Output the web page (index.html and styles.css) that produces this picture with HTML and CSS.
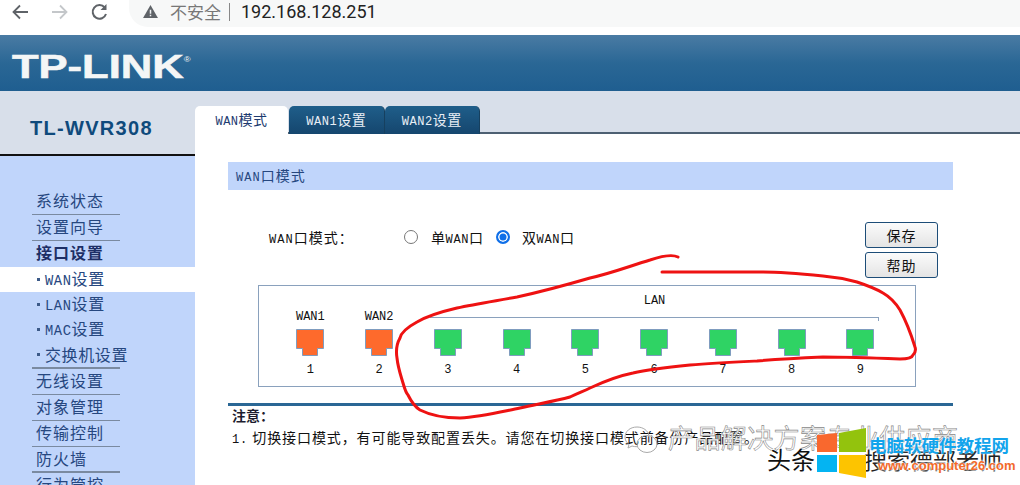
FILE: index.html
```html
<!DOCTYPE html>
<html>
<head>
  <title>TL-WVR308</title>
  <link rel="stylesheet" href="styles.css">
</head>
<body>
  <div class="browser-bar">
    <svg class="nav-icon" width="20" height="20" viewBox="0 0 20 20"><path d="M18 10H4M10 3.500L3.500 10l6.500 6.500" fill="none" stroke="#5f6368" stroke-width="1.800"/></svg>
    <svg class="nav-icon forward" width="20" height="20" viewBox="0 0 20 20"><path d="M2 10h14M10 3.500l6.500 6.500-6.500 6.500" fill="none" stroke="#c4c7ca" stroke-width="1.800"/></svg>
    <svg class="nav-icon reload" width="20" height="20" viewBox="0 0 20 20"><path d="M16 12a6.800 6.800 0 1 1-1.300-6.500" fill="none" stroke="#5f6368" stroke-width="2"/><path d="M16.500 2v6h-6z" fill="#5f6368"/></svg>
    <div class="url-pill">
      <svg width="15" height="13" viewBox="0 0 16 14"><path d="M8 0l8 14H0z" fill="#5f6368"/><path d="M7.200 5h1.600v4.500H7.200zM7.200 10.500h1.600V12H7.200z" fill="#f1f3f4"/></svg>
      <span class="not-safe">不安全</span>
      <span class="url-sep"></span>
      <span class="url-text">192.168.128.251</span>
    </div>
  </div>

  <header class="logo-bar">
    <div class="logo">TP-LINK<sup>®</sup></div>
  </header>

  <div class="page">
    <aside class="side">
      <div class="model">TL-WVR308</div>
      <nav class="menu">
        <div class="item">系统状态</div>
        <div class="item">设置向导</div>
        <div class="item open">接口设置</div>
        <div class="sub active"><i></i><span><span class="lt">WAN</span>设置</span></div>
        <div class="sub"><i></i><span><span class="lt">LAN</span>设置</span></div>
        <div class="sub"><i></i><span><span class="lt">MAC</span>设置</span></div>
        <div class="sub"><i></i><span>交换机设置</span></div>
        <div class="item after-sub">无线设置</div>
        <div class="item">对象管理</div>
        <div class="item">传输控制</div>
        <div class="item thick">防火墙</div>
        <div class="item">行为管控</div>
      </nav>
    </aside>

    <main class="main">
      <div class="tabs">
        <div class="tab current"><span class="lt">WAN</span>模式</div>
        <div class="tab"><span class="lt">WAN1</span>设置</div>
        <div class="tab"><span class="lt">WAN2</span>设置</div>
      </div>
      <div class="content">
        <h2 class="title"><span class="lt">WAN</span>口模式</h2>
        <div class="form-row">
          <span class="form-label"><span class="lt">WAN</span>口模式：</span>
          <span class="radio"></span>
          <span class="radio-text">单<span class="lt">WAN</span>口</span>
          <span class="radio on"></span>
          <span class="radio-text">双<span class="lt">WAN</span>口</span>
          <div class="buttons">
            <button class="btn">保存</button>
            <button class="btn">帮助</button>
          </div>
        </div>
        <div class="port-box">
          <div class="lan-head">
            <div class="lan-name">LAN</div>
            <div class="lan-line"></div>
          </div>
          <div class="ports">
            <div class="port wan"><span class="port-name">WAN1</span><svg width="28" height="27" viewBox="0 0 28 27"><path d="M.5.5h27v19h-6v7h-15v-7h-6z"/></svg><span class="port-num">1</span></div>
            <div class="port wan"><span class="port-name">WAN2</span><svg width="28" height="27" viewBox="0 0 28 27"><path d="M.5.5h27v19h-6v7h-15v-7h-6z"/></svg><span class="port-num">2</span></div>
            <div class="port"><span class="port-name"></span><svg width="28" height="27" viewBox="0 0 28 27"><path d="M.5.5h27v19h-6v7h-15v-7h-6z"/></svg><span class="port-num">3</span></div>
            <div class="port"><span class="port-name"></span><svg width="28" height="27" viewBox="0 0 28 27"><path d="M.5.5h27v19h-6v7h-15v-7h-6z"/></svg><span class="port-num">4</span></div>
            <div class="port"><span class="port-name"></span><svg width="28" height="27" viewBox="0 0 28 27"><path d="M.5.5h27v19h-6v7h-15v-7h-6z"/></svg><span class="port-num">5</span></div>
            <div class="port"><span class="port-name"></span><svg width="28" height="27" viewBox="0 0 28 27"><path d="M.5.5h27v19h-6v7h-15v-7h-6z"/></svg><span class="port-num">6</span></div>
            <div class="port"><span class="port-name"></span><svg width="28" height="27" viewBox="0 0 28 27"><path d="M.5.5h27v19h-6v7h-15v-7h-6z"/></svg><span class="port-num">7</span></div>
            <div class="port"><span class="port-name"></span><svg width="28" height="27" viewBox="0 0 28 27"><path d="M.5.5h27v19h-6v7h-15v-7h-6z"/></svg><span class="port-num">8</span></div>
            <div class="port"><span class="port-name"></span><svg width="28" height="27" viewBox="0 0 28 27"><path d="M.5.5h27v19h-6v7h-15v-7h-6z"/></svg><span class="port-num">9</span></div>
          </div>
        </div>
        <div class="note">
          <div class="note-head">注意：</div>
          <div class="note-text"><span class="lt">1.</span> 切换接口模式，有可能导致配置丢失。请您在切换接口模式前备份产品配置。</div>
        </div>
      </div>
    </main>
  </div>

  <!-- hand drawn mark and watermark lie over the page -->
  <svg class="scribble" width="1020" height="485" viewBox="0 0 1020 485">
    <path d="M678 257C672 254 662 256 650 260C630 266 612 273 590 278C566 285 540 292 517 297C495 301 475 304 457 308C440 312 427 316 417 322C406 328 401 333 400 338C396 345 396 352 397 358C398 368 401 376 403 383C405 390 406 393 408 395C412 403 415 407 420 410C432 416 446 418 460 418C480 417 500 412 520 408C538 404 555 401 570 397C578 393 584 391 590 388C605 381 618 376 633 373C650 369 670 367 690 365C712 363 735 362 757 361C780 359 800 358 823 357C850 357 875 358 900 359C908 359 912 358 913 355C916 352 916 350 915 347C911 334 906 321 900 310C895 302 890 297 883 293C875 288 866 285 857 282C846 279 835 277 823 276C803 274 783 272 763 272C730 272 695 272 662 272" fill="none" stroke="#ee1212" stroke-width="3" stroke-linecap="round"/>
  </svg>
  <div class="watermark">
    <svg class="wx" width="34" height="30" viewBox="0 0 34 30"><path d="M13 1C6 1 1 5.500 1 11c0 3 1.500 5.500 4 7.500L4 22l4-2c1.500.5 3 .7 5 .7" fill="none" stroke="#aaa"/><path d="M13 1c6 0 11 3.500 12 8.500" fill="none" stroke="#aaa"/><ellipse cx="23" cy="18" rx="10" ry="8.500" fill="none" stroke="#aaa"/></svg>
    <div class="wm-line">产品解决方案专业供应商</div>
    <div class="wm-toutiao">头条</div>
    <div class="wm-account">搜索德部老师</div>
    <svg class="win" width="52" height="52" viewBox="0 0 52 52"><path d="M1 7l20-2v19H1z" fill="#f9682e"/><path d="M23 5l27-5v24H23z" fill="#93c30d"/><path d="M1 27h20v17H1z" fill="#04b4f2"/><path d="M23 27h27v23l-27-5z" fill="#fdc400"/></svg>
    <div class="wm-site">电脑软硬件教程网</div>
    <div class="wm-url">www.computer26.com</div>
  </div>
</body>
</html>
```

FILE: styles.css
```css
html, body {
  margin: 0;
  padding: 0;
}
body {
  position: relative;
  width: 1020px;
  height: 485px;
  overflow: hidden;
  background-color: #fff;
  font-family: "Noto Sans CJK SC", sans-serif;
  color: #111;
}
.lt {
  font-family: "Liberation Mono", monospace;
  font-size: 0.86em;
}

/* browser bar */
.browser-bar {
  display: flex;
  align-items: center;
  height: 33px;
  padding-bottom: 2px;
  padding-left: 10px;
  border-bottom: 2px solid #d5d8dc;
  background-color: #fff;
}
.nav-icon {
  margin-right: 20px;
  margin-top: -10px;
}
.nav-icon.reload {
  margin-right: 19px;
}
.url-pill {
  display: flex;
  flex: 1;
  align-items: center;
  height: 38px;
  margin-top: -18px;
  padding-left: 14px;
  padding-top: 8px;
  box-sizing: border-box;
  border-radius: 0 0 0 19px;
  background-color: #f7f8f8;
}
.not-safe {
  margin-left: 12px;
  font-size: 17px;
  color: #777;
}
.url-sep {
  width: 1px;
  height: 18px;
  margin: 0 11px 0 8px;
  background-color: #888;
}
.url-text {
  font-family: Roboto, sans-serif;
  font-size: 18px;
  color: #222;
}

/* logo */
.logo-bar {
  height: 56px;
  margin-top: -2px;
  background: linear-gradient(#4a7ba3, #2a6795 50%, #1f5e90);
}
.logo {
  width: fit-content;
  padding: 6px 0 0 9px;
  font-family: "Liberation Sans", sans-serif;
  font-weight: bold;
  font-size: 33px;
  line-height: 38px;
  color: #f4f6f6;
  transform: scaleX(1.32);
  transform-origin: left;
  -webkit-text-stroke: 0.6px #f4f6f6;
}
.logo sup {
  font-size: 7px;
  font-weight: normal;
  vertical-align: 16px;
  -webkit-text-stroke: 0;
}

/* layout */
.page {
  display: flex;
  height: 394px;
}
.side {
  width: 195px;
  flex: none;
  background-color: #c0d5fb;
}
.model {
  height: 65px;
  padding: 24px 0 0 30px;
  box-sizing: border-box;
  border-bottom: 2px solid #111;
  background-color: #d8dfea;
  font-family: "Liberation Sans", sans-serif;
  font-weight: bold;
  font-size: 20px;
  line-height: 26px;
  letter-spacing: 1.3px;
  color: #0f4a7c;
}

/* left menu */
.menu {
  padding-top: 33px;
}
.item {
  width: 88px;
  height: 26px;
  margin-left: 32px;
  padding-left: 4px;
  box-sizing: border-box;
  border-bottom: 1px solid #7a8aa0;
  font-size: 16px;
  line-height: 23px;
  letter-spacing: 1px;
  color: #26477f;
  white-space: nowrap;
}
.item.open {
  border-bottom: none;
  font-weight: bold;
  color: #1d2f66;
}
.item.thick {
  border-bottom: 2px solid #7a8aa0;
}
.item.after-sub {
  height: 28px;
  border-top: 2px solid #7a8aa0;
}
.sub {
  display: flex;
  align-items: center;
  height: 25px;
  padding-left: 37px;
  font-size: 16px;
  line-height: 25px;
  letter-spacing: 0.6px;
  color: #26477f;
}
.sub i {
  width: 3px;
  height: 3px;
  margin-right: 5px;
  background-color: #3c5a88;
}
.sub.active {
  background-color: #fff;
}

/* tabs */
.main {
  flex: 1;
  background-color: #d8dfea;
}
.tabs {
  display: flex;
  height: 28px;
  margin-top: 15px;
  border-bottom: 2px solid #4d6072;
  box-sizing: border-box;
}
.tab {
  width: 95.5px;
  height: 28px;
  border-radius: 5px 5px 0 0;
  background: linear-gradient(#1f5e8a, #15466e);
  border-right: 1px solid #16405f;
  box-sizing: border-box;
  font-size: 14px;
  line-height: 26px;
  letter-spacing: 0.5px;
  text-align: center;
  color: #e8eef5;
}
.tab.current {
  width: 93px;
  margin-right: 1px;
  border: none;
  background: #fff;
  color: #1d3b70;
}

/* content */
.content {
  height: 351px;
  padding: 28px 0 0 33px;
  box-sizing: border-box;
  background-color: #fff;
}
.title {
  width: 725px;
  height: 28px;
  margin: 0;
  padding-left: 8px;
  box-sizing: border-box;
  background-color: #c0d5fb;
  font-size: 14px;
  font-weight: normal;
  line-height: 27px;
  letter-spacing: 1px;
  color: #26477f;
}
.form-row {
  display: flex;
  align-items: flex-start;
  width: 710px;
  height: 95px;
  padding: 32px 0 0 41px;
  box-sizing: border-box;
  font-size: 14px;
  line-height: 30px;
}
.form-label {
  width: 135px;
  letter-spacing: 1px;
  white-space: nowrap;
}
.radio {
  width: 14px;
  height: 14px;
  margin: 8px 13px 0 0;
  flex: none;
  border: 1px solid #777;
  border-radius: 50%;
  box-sizing: border-box;
  background-color: #fff;
}
.radio.on {
  border: 2px solid #0f6fe8;
  box-shadow: inset 0 0 0 1.5px #fff;
  background-color: #0f6fe8;
  margin-right: 12px;
}
.radio-text {
  width: 65px;
  white-space: nowrap;
  letter-spacing: 0.6px;
}
.buttons {
  display: flex;
  flex-direction: column;
  gap: 4px;
  margin-left: auto;
}
.btn {
  width: 73px;
  height: 26px;
  padding: 0;
  border: 1px solid #1d4d78;
  border-radius: 3px;
  background: linear-gradient(#fbfbfb, #e4e4e4);
  font-family: "Noto Sans CJK SC", sans-serif;
  font-size: 14px;
  line-height: 22px;
  letter-spacing: 1px;
  color: #111;
}

/* port panel */
.port-box {
  position: relative;
  width: 658px;
  height: 102px;
  margin-left: 30px;
  border: 1px solid #8aa1bd;
  box-sizing: border-box;
}
.lan-head {
  position: absolute;
  left: 171px;
  top: 7px;
  width: 449px;
}
.lan-name {
  height: 24px;
  text-align: center;
  font-family: "Liberation Mono", monospace;
  font-size: 12px;
  line-height: 16px;
}
.lan-line {
  height: 3px;
  border-top: 1px solid #8aa1bd;
  border-right: 1px solid #8aa1bd;
}
.ports {
  display: grid;
  grid-template-columns: repeat(9, 68.75px);
  padding: 22px 0 0 17px;
}
.port {
  display: flex;
  flex-direction: column;
  align-items: center;
}
.port-name {
  height: 21px;
  font-family: "Liberation Mono", monospace;
  font-size: 12px;
  line-height: 18px;
}
.port svg {
  display: block;
}
.port path {
  fill: #2fd364;
  stroke: #7f9cbf;
}
.port.wan path {
  fill: #fe6a2c;
}
.port-num {
  margin-top: 4px;
  font-family: "Liberation Mono", monospace;
  font-size: 12px;
  line-height: 20px;
}

/* note */
.note {
  width: 725px;
  margin-top: 16px;
  padding-left: 4px;
  box-sizing: border-box;
  border-top: 3px solid #2a6795;
  font-size: 14px;
  white-space: nowrap;
}
.note-head {
  font-weight: bold;
  line-height: 18px;
  color: #1d1d2f;
}
.note-text {
  margin-top: 3px;
  line-height: 20px;
  letter-spacing: 0.9px;
}

/* overlays */
.scribble {
  position: absolute;
  left: 0;
  top: 0;
}
.watermark {
  position: absolute;
  left: 0;
  top: 0;
  width: 1020px;
  height: 485px;
}
.wx {
  position: absolute;
  left: 624px;
  top: 426px;
}
.wm-line {
  position: absolute;
  left: 668px;
  top: 422px;
  font-size: 26px;
  line-height: 30px;
  letter-spacing: 0.4px;
  white-space: nowrap;
  color: #fff;
  -webkit-text-stroke: 0.6px #888;
}
.wm-toutiao {
  position: absolute;
  left: 767px;
  top: 443px;
  font-size: 24px;
  line-height: 32px;
  white-space: nowrap;
  color: #111;
  text-shadow: 1px 1px 0 #fff, -1px -1px 0 #fff;
}
.wm-account {
  position: absolute;
  left: 864px;
  top: 444px;
  font-size: 23px;
  line-height: 30px;
  white-space: nowrap;
  color: #222;
  text-shadow: 1px 1px 0 #fff, -1px -1px 0 #fff;
}
.win {
  position: absolute;
  left: 816px;
  top: 428px;
}
.wm-site {
  position: absolute;
  left: 869px;
  top: 434px;
  font-size: 17.5px;
  font-weight: bold;
  line-height: 22px;
  white-space: nowrap;
  color: #12a4ec;
  text-shadow: 0 0 2px #fff;
}
.wm-url {
  position: absolute;
  left: 878px;
  top: 458px;
  font-family: "Liberation Sans", sans-serif;
  font-size: 13px;
  font-weight: bold;
  line-height: 16px;
  white-space: nowrap;
  color: #f26a2a;
  text-shadow: 0 0 2px #fff, 0 0 2px #fff, 0 0 3px #fff;
}
```
